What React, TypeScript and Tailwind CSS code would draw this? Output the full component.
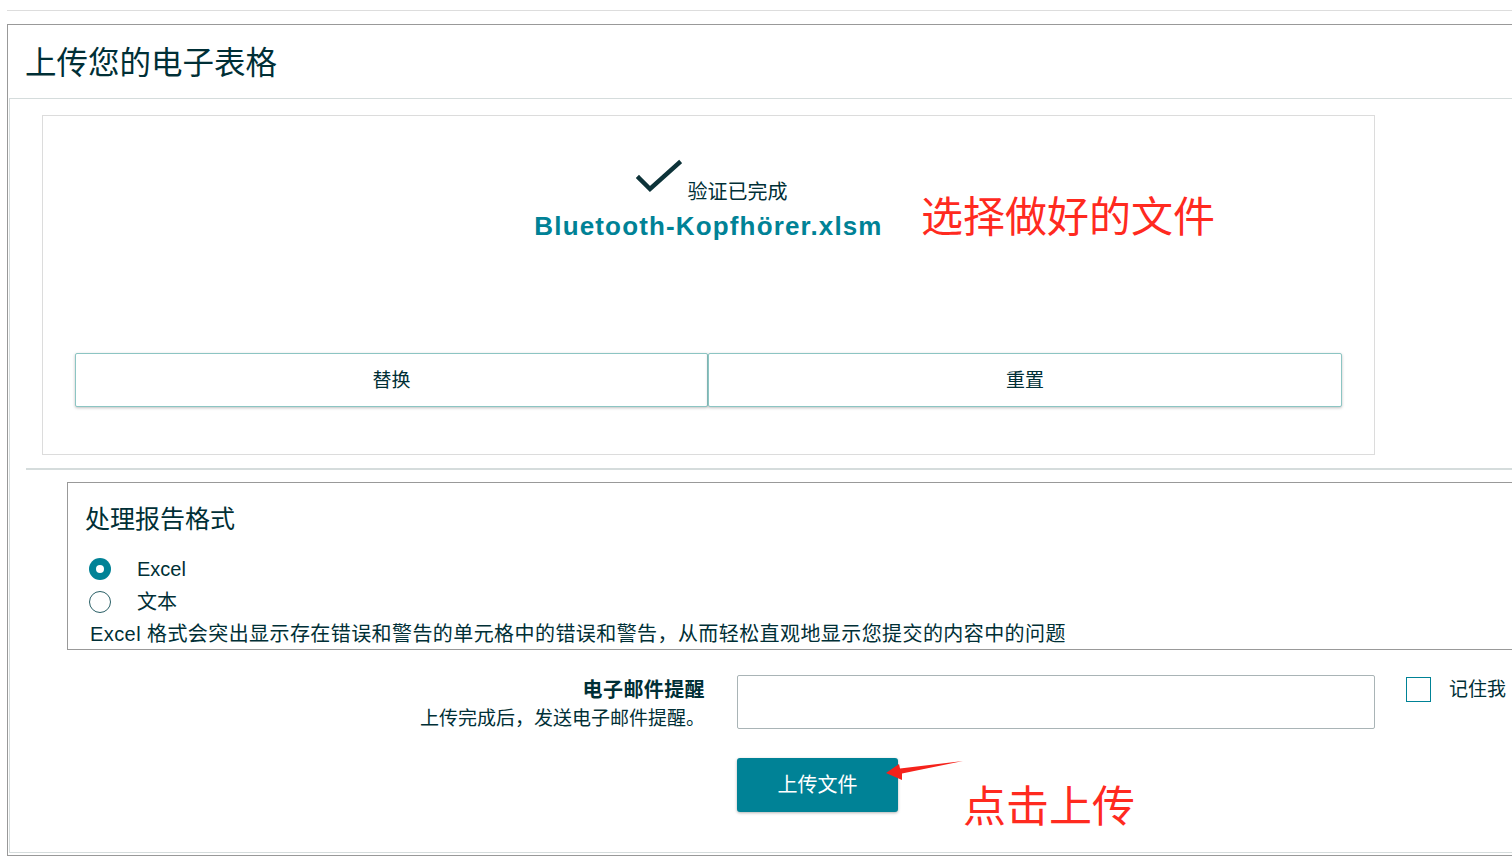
import React from "react";

const FONT = { fontFamily: '"Liberation Sans", "Noto Sans CJK SC", sans-serif' };

export default function App() {
  return (
    <div className="relative w-[1512px] h-[856px] overflow-hidden bg-white text-[#002f36]" style={FONT}>
      <div className="ml-[7px] mt-[10px] h-px bg-[#dddddd]" />
      <div className="ml-[7px] mt-[13px] h-[832px] w-[1505px] border-l border-t border-b border-[#999999] flex flex-col">
        <div className="h-[73px] flex items-center pl-[17px] text-[31.5px] leading-none pt-[4px]">上传您的电子表格</div>
        <div className="ml-px h-[755px] border-l border-t border-b border-[#d5dcdc]">
          {/* upload box */}
          <div className="ml-[32px] mt-[16px] w-[1333px] h-[340px] border border-[#dcdcdc] flex flex-col items-center">
            <div className="mt-[44px] h-[36px] flex items-end ml-[6px]">
              <svg width="46" height="36" viewBox="0 0 46 36" className="mb-[1px]">
                <path d="M3 19 L14 30 L43 4" fill="none" stroke="#0d3339" strokeWidth="4.5" strokeLinecap="square" />
              </svg>
              <span className="ml-[6px] text-[20px] leading-[24px] mb-[-8px]">验证已完成</span>
            </div>
            <div className="mt-[14px] leading-[32px] text-[26px] font-bold tracking-[1.15px] text-[#008296]">Bluetooth-Kopfhörer.xlsm</div>
            <div className="mt-[111px] w-full px-[32px] flex">
              <button className="w-[633px] h-[54px] pt-[3px] bg-white border border-[#8cc5c3] rounded-[2px] shadow-[0_1px_3px_rgba(0,0,0,0.25)] text-[19px]">替换</button>
              <button className="w-[634px] h-[54px] pt-[3px] bg-white border border-[#8cc5c3] rounded-[2px] shadow-[0_1px_3px_rgba(0,0,0,0.25)] text-[19px]">重置</button>
            </div>
          </div>
          {/* divider */}
          <div className="ml-[16px] mt-[13px] h-[2px] bg-[#d5dcdc]" />
          {/* fieldset */}
          <div className="ml-[57px] mt-[12px] h-[168px] border-l border-t border-b border-[#999999] pl-[17px]">
            <div className="mt-[20px] text-[25px] leading-[32px]">处理报告格式</div>
            <div className="mt-[18px] h-[32px] flex items-center ml-[4px]">
              <span className="w-[22px] h-[22px] rounded-full bg-[#008296] flex items-center justify-center">
                <span className="w-[8px] h-[8px] rounded-full bg-white" />
              </span>
              <span className="ml-[26px] text-[20px]">Excel</span>
            </div>
            <div className="h-[33px] flex items-center ml-[4px]">
              <span className="w-[22px] h-[22px] rounded-full border border-[#2a5f66]" />
              <span className="ml-[26px] text-[20px]">文本</span>
            </div>
            <div className="mt-[4px] ml-[5px] text-[20px] leading-[24px] tracking-[0.42px] whitespace-nowrap">Excel 格式会突出显示存在错误和警告的单元格中的错误和警告，从而轻松直观地显示您提交的内容中的问题</div>
          </div>
          {/* email row */}
          <div className="mt-[25px] flex items-start">
            <div className="w-[695px] text-right pt-[1px]">
              <div className="text-[20px] font-bold leading-[28px] tracking-[0.4px]">电子邮件提醒</div>
              <div className="text-[19px] leading-[28px] mt-[1px]">上传完成后，发送电子邮件提醒。</div>
            </div>
            <div className="ml-[32px] w-[638px] h-[54px] border border-[#a9b4b6] rounded-[2px]" />
            <div className="ml-[31px] mt-[2px] w-[25px] h-[25px] border-[1.5px] border-[#008296]" />
            <div className="ml-[18px] mt-[1px] text-[19px] leading-[28px] whitespace-nowrap">记住我</div>
          </div>
          <div className="mt-[25px] ml-[727px]">
            <button className="w-[161px] h-[54px] rounded-[3px] bg-[#008296] text-white text-[20px] shadow-[0_1px_3px_rgba(0,0,0,0.3)]">上传文件</button>
          </div>
        </div>
      </div>

      {/* annotations */}
      <div className="absolute left-[921px] top-[196px] text-[42px] leading-[44px] text-[#ff2a1f] whitespace-nowrap">选择做好的文件</div>
      <div className="absolute left-[963px] top-[785px] text-[43px] leading-[44px] text-[#ff2a1f] whitespace-nowrap">点击上传</div>
      <svg className="absolute left-[880px] top-[755px]" width="90" height="30" viewBox="0 0 90 30">
        <polygon points="6,18 19,9 20,13.5 83,6 22,18.5 22,25" fill="#f5221b" />
      </svg>
    </div>
  );
}
